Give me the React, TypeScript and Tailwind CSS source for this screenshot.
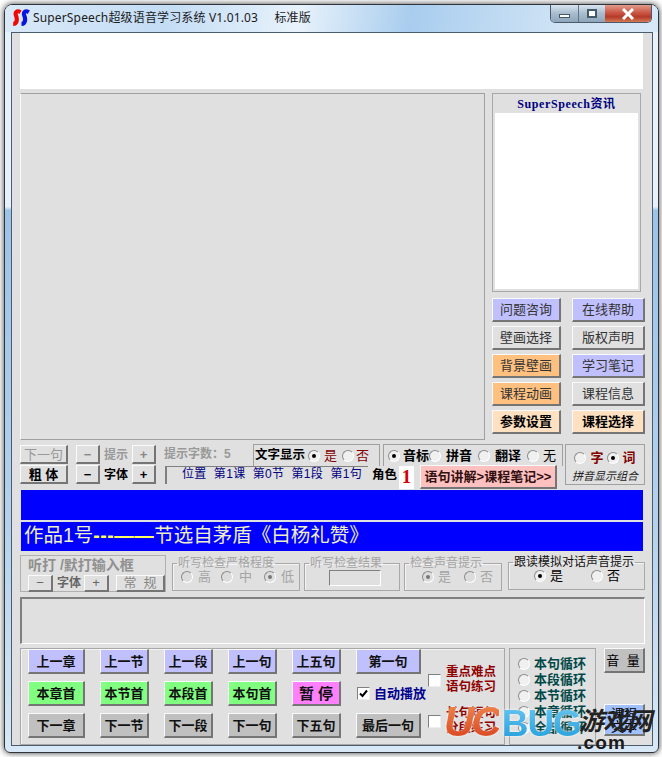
import React from "react";

const bevel = "border-t border-l border-r-2 border-b-2 border-t-[#fafafa] border-l-[#fafafa] border-r-[#757575] border-b-[#757575]";

function Btn({ className = "", children }: { className?: string; children: React.ReactNode }) {
  return (
    <div className={`${bevel} flex items-center justify-center whitespace-nowrap shrink-0 text-[13px] leading-none ${className}`}>
      {children}
    </div>
  );
}

function Radio({ on = false, off = false }: { on?: boolean; off?: boolean }) {
  return (
    <span className={`relative flex items-center justify-center w-[12px] h-[12px] rounded-full border shrink-0 border-t-[#8c8c8c] border-l-[#8c8c8c] border-r-[#fff] border-b-[#fff] ${off ? "bg-[#dcdcdc]" : "bg-[#f0f0f0]"}`}>
      {on && <span className={`w-[4px] h-[4px] rounded-full ${off ? "bg-[#777]" : "bg-black"}`} />}
    </span>
  );
}

function Check({ on = false }: { on?: boolean }) {
  return (
    <span className="flex items-center justify-center w-[13px] h-[13px] bg-white border border-t-[#808080] border-l-[#808080] border-r-[#eee] border-b-[#eee] shrink-0">
      {on && (
        <svg width="9" height="9" viewBox="0 0 9 9">
          <path d="M1 4.5 L3.5 7 L8 1.5" fill="none" stroke="#000" strokeWidth="2" />
        </svg>
      )}
    </span>
  );
}

function Field({ title, className = "", titleClass = "text-[#a4a4a4]", children }: { title: string; className?: string; titleClass?: string; children: React.ReactNode }) {
  return (
    <fieldset className={`border border-[#a8a8a8] shadow-[inset_1px_1px_0_#f4f4f4] shrink-0 h-[35px] ${className}`}>
      <legend className={`ml-[4px] px-[1px] text-[12px] leading-[14px] whitespace-nowrap ${titleClass}`}>{title}</legend>
      {children}
    </fieldset>
  );
}

function Loop({ children }: { children: React.ReactNode }) {
  return <div className="flex items-center gap-[4px]"><Radio />{children}</div>;
}

const nav = "h-[25px] font-bold text-[13px] text-[#111]";

export default function App() {
  return (
    <div className="relative w-[662px] h-[757px] overflow-hidden bg-white [font-family:'Liberation_Sans','Noto_Sans_CJK_SC',sans-serif] text-black">
      <div className="w-[655px] h-[749px] ml-[4px] mt-[4px] rounded-t-[8px] rounded-b-[6px] border border-[#2f343a] bg-[linear-gradient(#e6f1fb_0%,#e6f1fb_27%,#9cc3e8_27.5%,#b4d2ee_70%,#d8e8f6_100%)] shadow-[0_0_6px_#3c3c3c] flex flex-col">
        {/* title bar */}
        <div className="flex items-start h-[27px] shrink-0 rounded-t-[7px] bg-[linear-gradient(100deg,#d9e9f8_0%,#c4ddf5_25%,#e8f2fb_45%,#a9cdee_62%,#cfe3f5_85%,#d7e8f7_100%)]">
          <svg width="18" height="18" viewBox="0 0 18 18" className="ml-[7px] mt-[4px] shrink-0">
            <path d="M8.5 3.2 C5 1 2.8 3.2 4 6.5 C5.2 9.5 5.5 14.8 1.2 14.8" fill="none" stroke="#f00808" strokeWidth="4.2" />
            <path d="M16.8 3.2 C13.3 1 11.1 3.2 12.3 6.5 C13.5 9.5 13.8 14.8 9.5 14.8" fill="none" stroke="#0a14e0" strokeWidth="4.2" />
          </svg>
          <div className="ml-[3px] mt-[5px] text-[12px] leading-[16px] tracking-[0.15px] whitespace-pre text-[#1a1a1a] [font-family:'Noto_Sans','Noto_Sans_CJK_SC',sans-serif]">
            SuperSpeech超级语音学习系统 V1.01.03     标准版
          </div>
          <div className="ml-auto mr-[6px] flex h-[18px] w-[102px] rounded-b-[5px] border border-t-0 border-[#4a5a6a] overflow-hidden shrink-0">
            <div className="w-[28px] flex items-end justify-center pb-[4px] border-r border-[#5f7488] bg-[linear-gradient(#d9e5f0,#a8bccd_50%,#8ea6bb)]">
              <span className="w-[11px] h-[4px] bg-white border border-[#44586a]" />
            </div>
            <div className="w-[26px] flex items-center justify-center bg-[linear-gradient(#d9e5f0,#a8bccd_50%,#8ea6bb)]">
              <span className="w-[10px] h-[9px] bg-white border-2 border-[#44586a]" />
            </div>
            <div className="flex-1 flex items-center justify-center bg-[linear-gradient(#e29b8a,#c7503e_50%,#b33a28_70%,#d57a55)]">
              <svg width="14" height="12" viewBox="0 0 14 12">
                <path d="M2 1 L12 11 M12 1 L2 11" stroke="#fff" strokeWidth="3" />
              </svg>
            </div>
          </div>
        </div>

        {/* client */}
        <div className="ml-[6px] w-[642px] h-[714px] bg-[#e0e0e0] border border-[#4b5c6c] pl-[8px] flex flex-col shrink-0">
          <div className="w-[623px] h-[56px] bg-white shrink-0" />

          <div className="mt-[4px] flex gap-[7px] h-[347px] shrink-0">
            <div className="w-[465px] border border-[#a0a0a0] border-l-[#fafafa] bg-[#e0e0e0]" />
            <div className="w-[153px] flex flex-col">
              <div className="w-[149px] h-[199px] border border-[#a8a8a8] px-[2px] pb-[2px] flex flex-col shrink-0">
                <div className="h-[19px] flex items-center justify-center text-[12px] font-bold text-[#000080] [font-family:'Liberation_Serif','Noto_Sans_CJK_SC',serif] tracking-[0.6px]">
                  SuperSpeech资讯
                </div>
                <div className="flex-1 bg-white" />
              </div>
              <div className="mt-[6px] grid grid-cols-[69px_73px] gap-x-[11px] grid-rows-[24px_24px_24px_24px_24px] gap-y-[4px] text-[#333]">
                <Btn className="bg-[#c0c0ff] text-[12px]">问题咨询</Btn>
                <Btn className="bg-[#c0c0ff] text-[12px]">在线帮助</Btn>
                <Btn className="bg-[#e0e0e0] text-[12px]">壁画选择</Btn>
                <Btn className="bg-[#e0e0e0] text-[12px]">版权声明</Btn>
                <Btn className="bg-[#ffc080] text-[12px]">背景壁画</Btn>
                <Btn className="bg-[#c0c0ff] text-[12px]">学习笔记</Btn>
                <Btn className="bg-[#ffc080] text-[12px]">课程动画</Btn>
                <Btn className="bg-[#e0e0e0] text-[12px]">课程信息</Btn>
                <Btn className="bg-[#ffe0c0] font-bold text-black">参数设置</Btn>
                <Btn className="bg-[#ffe0c0] font-bold text-black">课程选择</Btn>
              </div>
            </div>
          </div>

          {/* control rows */}
          <div className="mt-[4px] h-[46px] flex shrink-0">
            <div className="w-[48px] mt-[1px] flex flex-col gap-[1px] shrink-0">
              <Btn className="h-[19px] text-[#999]">下一句</Btn>
              <Btn className="h-[19px] font-bold">粗 体</Btn>
            </div>
            <div className="ml-[8px] w-[80px] mt-[1px] flex flex-col gap-[1px] shrink-0">
              <div className="flex items-center justify-between h-[19px]">
                <Btn className="w-[24px] h-[19px] text-[#888] font-bold">−</Btn>
                <span className="text-[12px] font-bold text-[#999]">提示</span>
                <Btn className="w-[24px] h-[19px] text-[#888] font-bold">+</Btn>
              </div>
              <div className="flex items-center justify-between h-[19px]">
                <Btn className="w-[24px] h-[19px] font-bold">−</Btn>
                <span className="text-[12px] font-bold">字体</span>
                <Btn className="w-[24px] h-[19px] font-bold">+</Btn>
              </div>
            </div>
            <div className="ml-[8px] flex flex-col w-[401px] shrink-0">
              <div className="flex h-[22px]">
                <div className="w-[89px] text-[12px] leading-[20px] font-bold text-[#999] shrink-0">提示字数：5</div>
                <div className="w-[127px] border border-[#a0a0a0] border-b-0 flex items-center pl-[1px] shrink-0">
                  <span className="text-[12.5px] font-bold whitespace-nowrap">文字显示</span>
                  <span className="ml-[3px]"><Radio on /></span>
                  <span className="ml-[4px] text-[13px] text-[#800000]">是</span>
                  <span className="ml-[5px]"><Radio /></span>
                  <span className="ml-[2px] text-[13px] text-[#800000]">否</span>
                </div>
                <div className="ml-[3px] w-[180px] border border-[#a0a0a0] border-b-0 flex items-center pl-[4px] shrink-0">
                  <Radio on />
                  <span className="ml-[3px] text-[13px] font-bold">音标</span>
                  <Radio />
                  <span className="ml-[5px] text-[13px] font-bold">拼音</span>
                  <span className="ml-[6px]"><Radio /></span>
                  <span className="ml-[5px] text-[13px] font-bold">翻译</span>
                  <span className="ml-[6px]"><Radio /></span>
                  <span className="ml-[4px] text-[13px]">无</span>
                </div>
              </div>
              <div className="flex h-[24px]">
                <div className="ml-[1px] mb-[6px] w-[203px] border-l-2 border-t border-[#808080] border-l-[#808080] text-[12px] leading-[14px] text-[#000080] pl-[15px] tracking-[0.3px] whitespace-pre shrink-0">
                  位置  第1课  第0节  第1段  第1句
                </div>
                <span className="ml-[4px] w-[25px] text-[12.5px] leading-[16px] mt-[1px] font-bold shrink-0">角色</span>
                <div className="ml-[2px] w-[15px] h-[23px] bg-white flex items-center justify-center text-[#d00000] font-bold text-[19px] [font-family:'Liberation_Serif',serif] shrink-0">1</div>
                <Btn className="ml-[6px] w-[137px] h-[24px] bg-[#ffc0c0] font-bold text-[12.5px] text-[#301010] -mt-[1px]">语句讲解&gt;课程笔记&gt;&gt;</Btn>
              </div>
            </div>
            <div className="w-[80px] h-[41px] border border-[#a0a0a0] shrink-0 flex flex-col items-center pt-[3px]">
              <div className="flex items-center">
                <Radio />
                <span className="ml-[4px] text-[13px] font-bold text-[#800000]">字</span>
                <span className="ml-[3px]"><Radio on /></span>
                <span className="ml-[4px] text-[13px] font-bold text-[#800000]">词</span>
              </div>
              <div className="mt-[1px] text-[11px] italic leading-[14px] whitespace-nowrap text-[#222]">拼音显示组合</div>
            </div>
          </div>

          <div className="w-[622px] ml-[1px] h-[30px] bg-[#0000ff] shrink-0" />
          <div className="w-[622px] ml-[1px] mt-[2px] h-[29px] bg-[#0000ff] pl-[3px] text-[19.5px] leading-[27px] text-[#f0f0c8] whitespace-nowrap shrink-0">
            作品1号<span className="text-[#ffff60] font-bold tracking-[0.5px]">---——</span>节选自茅盾《白杨礼赞》
          </div>

          {/* dictation row */}
          <div className="mt-[4px] flex shrink-0 h-[37px]">
            <div className="w-[146px] border border-[#b0b0b0] pl-[7px] shrink-0">
              <div className="text-[14px] leading-[18px] font-bold text-[#909090] whitespace-nowrap">听打 /默打输入框</div>
              <div className="flex items-center">
                <Btn className="w-[25px] h-[17px] text-[#666]">−</Btn>
                <span className="ml-[4px] w-[27px] text-[12px] font-bold text-[#666]">字体</span>
                <Btn className="w-[25px] h-[17px] text-[#666]">+</Btn>
                <Btn className="ml-[7px] w-[49px] h-[17px] text-[12px] text-[#888]">常&nbsp;&nbsp;规</Btn>
              </div>
            </div>
            <Field title="听写检查严格程度" className="ml-[6px] w-[128px] mt-[1px]">
              <div className="flex items-center pl-[8px] text-[13px] text-[#a4a4a4] leading-[14px]">
                <Radio off /><span className="ml-[5px]">高</span>
                <span className="ml-[10px]"><Radio off /></span><span className="ml-[6px]">中</span>
                <span className="ml-[12px]"><Radio on off /></span><span className="ml-[5px]">低</span>
              </div>
            </Field>
            <Field title="听写检查结果" className="ml-[4px] w-[96px] mt-[1px]">
              <div className="ml-[24px] w-[52px] h-[16px] border border-t-[#808080] border-l-[#808080] border-r-[#fff] border-b-[#fff]" />
            </Field>
            <Field title="检查声音提示" className="ml-[4px] w-[98px] mt-[1px]">
              <div className="flex items-center pl-[17px] text-[13px] text-[#a4a4a4] leading-[14px]">
                <Radio on off /><span className="ml-[4px]">是</span>
                <span className="ml-[13px]"><Radio off /></span><span className="ml-[4px]">否</span>
              </div>
            </Field>
            <Field title="跟读模拟对话声音提示" titleClass="text-[#111]" className="ml-[6px] w-[137px]">
              <div className="flex items-center pl-[25px] text-[13px] leading-[14px]">
                <Radio on /><span className="ml-[4px]">是</span>
                <span className="ml-[28px]"><Radio /></span><span className="ml-[4px]">否</span>
              </div>
            </Field>
          </div>

          <div className="mt-[5px] w-[625px] h-[47px] border-t-2 border-l-2 border-t-[#808080] border-l-[#808080] border-r border-b border-r-[#fff] border-b-[#fff] shrink-0" />

          {/* transport */}
          <div className="mt-[4px] flex shrink-0 h-[97px]">
            <div className="w-[485px] border border-[#a8a8a8] shadow-[inset_1px_1px_0_#f4f4f4] flex pl-[7px] shrink-0">
              <div className="grid grid-cols-[57px_49px_49px_49px_49px] gap-x-[15px] grid-rows-[25px_25px_25px] gap-y-[7px] h-[89px]">
                <Btn className={`${nav} bg-[#c0c0ff]`}>上一章</Btn>
                <Btn className={`${nav} bg-[#c0c0ff]`}>上一节</Btn>
                <Btn className={`${nav} bg-[#c0c0ff]`}>上一段</Btn>
                <Btn className={`${nav} bg-[#c0c0ff]`}>上一句</Btn>
                <Btn className={`${nav} bg-[#c0c0ff]`}>上五句</Btn>
                <Btn className={`${nav} bg-[#80ff80]`}>本章首</Btn>
                <Btn className={`${nav} bg-[#80ff80]`}>本节首</Btn>
                <Btn className={`${nav} bg-[#80ff80]`}>本段首</Btn>
                <Btn className={`${nav} bg-[#80ff80]`}>本句首</Btn>
                <Btn className={`${nav} bg-[#ff80ff] text-[15px]`}>暂 停</Btn>
                <Btn className={`${nav} bg-[#c0c0c0]`}>下一章</Btn>
                <Btn className={`${nav} bg-[#c0c0c0]`}>下一节</Btn>
                <Btn className={`${nav} bg-[#c0c0c0]`}>下一段</Btn>
                <Btn className={`${nav} bg-[#c0c0c0]`}>下一句</Btn>
                <Btn className={`${nav} bg-[#c0c0c0]`}>下五句</Btn>
              </div>
              <div className="ml-[15px] w-[70px] flex flex-col justify-between h-[89px] shrink-0">
                <Btn className={`${nav} bg-[#c0c0ff] w-[65px]`}>第一句</Btn>
                <div className="flex items-center pl-[1px]">
                  <Check on />
                  <span className="ml-[4px] text-[13px] font-bold text-[#000090] whitespace-nowrap">自动播放</span>
                </div>
                <Btn className={`${nav} bg-[#c0c0c0] w-[65px]`}>最后一句</Btn>
              </div>
              <div className="ml-[2px] flex flex-col shrink-0">
                <div className="flex items-center mt-[16px]">
                  <Check />
                  <div className="ml-[5px] text-[12.5px] leading-[15px] font-bold text-[#900000] whitespace-nowrap">重点难点<br />语句练习</div>
                </div>
                <div className="flex items-center mt-[11px]">
                  <Check />
                  <div className="ml-[5px] text-[12.5px] leading-[15px] font-bold text-[#900000] whitespace-nowrap">长句短句<br />分段练习</div>
                </div>
              </div>
            </div>
            <div className="ml-[4px] w-[87px] border border-[#a8a8a8] pl-[8px] pt-[7px] flex flex-col gap-[1px] text-[13px] leading-[15px] font-bold text-[#004848] shrink-0">
              <Loop>本句循环</Loop>
              <Loop>本段循环</Loop>
              <Loop>本节循环</Loop>
              <Loop>本章循环</Loop>
              <Loop>全部循环</Loop>
            </div>
            <div className="ml-[8px] w-[41px] flex flex-col shrink-0">
              <Btn className="h-[25px] bg-[#c0c0c0] text-[13px] tracking-[2px]">音 量</Btn>
              <Btn className="mt-[31px] h-[32px] bg-[#a0c0ff] text-[12px] leading-[14px] text-center whitespace-normal">课程<br />文本</Btn>
            </div>
          </div>
        </div>
      </div>

      {/* watermark */}
      <div className="absolute left-[444px] top-[701px] flex items-baseline pointer-events-none select-none">
        <span className="text-[42px] leading-[42px] font-bold italic tracking-[-3px] [font-family:'Liberation_Sans',sans-serif] text-transparent bg-clip-text bg-[linear-gradient(#f08a50,#d8401c)] drop-shadow-[0_0_1px_#fff]">UC</span>
        <span className="ml-[3px] text-[37px] leading-[42px] font-bold tracking-[-1px] [font-family:'Liberation_Sans',sans-serif] text-transparent bg-clip-text bg-[linear-gradient(#6cc8f2,#1c9ad8)] drop-shadow-[0_0_1px_#fff]">BUG</span>
      </div>
      <div className="absolute left-[579px] top-[707px] text-[25px] leading-[29px] italic font-bold text-[#222] whitespace-nowrap pointer-events-none tracking-[-1px]">游戏网</div>
      <div className="absolute left-[577px] top-[733px] text-[19px] leading-[20px] font-bold text-[#1a1a1a] tracking-[1.2px] [font-family:'Liberation_Sans',sans-serif] pointer-events-none">.com</div>
    </div>
  );
}
